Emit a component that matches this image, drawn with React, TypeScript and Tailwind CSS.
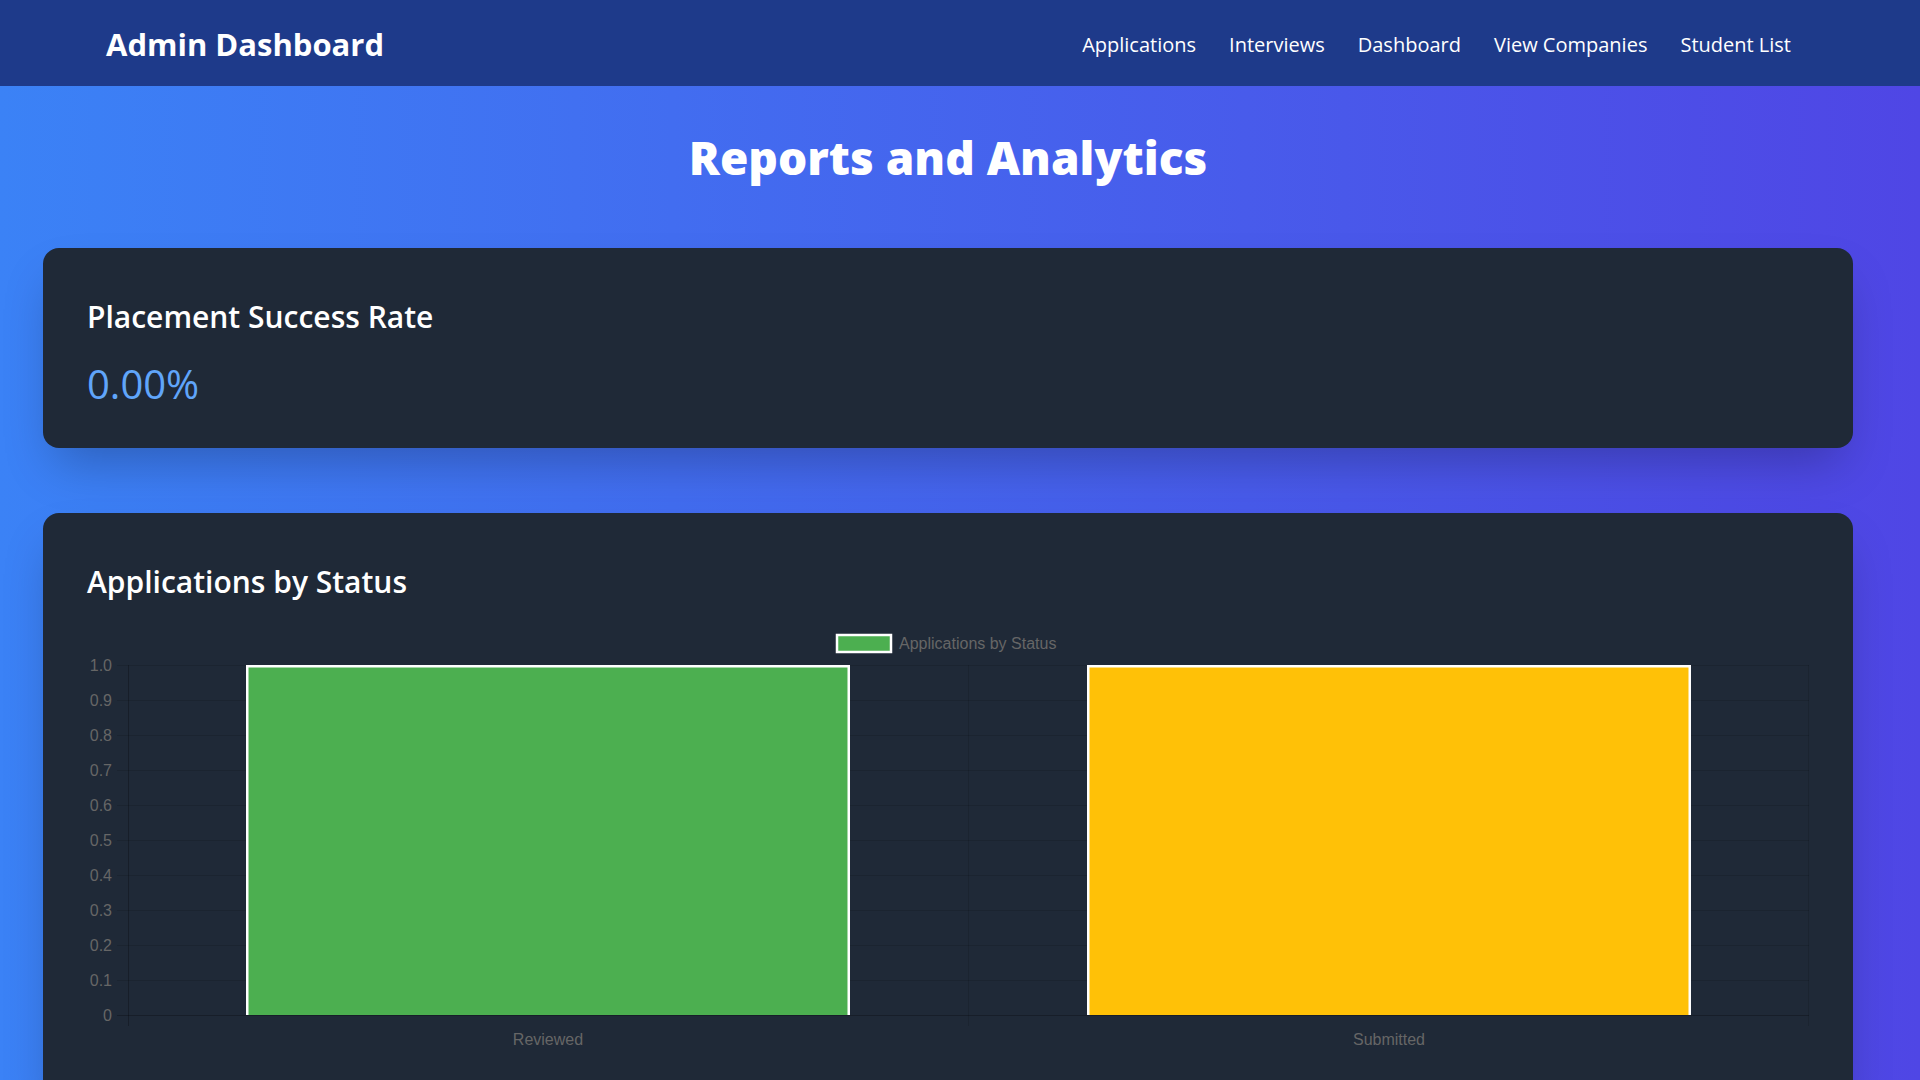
import React from "react";

const navLinks = ["Applications", "Interviews", "Dashboard", "View Companies", "Student List"];

const ticks = ["1.0", "0.9", "0.8", "0.7", "0.6", "0.5", "0.4", "0.3", "0.2", "0.1", "0"];

const bars = [
  { label: "Reviewed", color: "#4caf50", x: 159, center: 461 },
  { label: "Submitted", color: "#ffc107", x: 1000, center: 1302 },
];

// chart.js-like bar chart, drawn as svg
function StatusChart() {
  const top = 44;
  const step = 35;
  const bottom = top + step * 10;
  const barW = 604;
  const font = "'Liberation Sans', Arial, sans-serif";

  return (
    <svg width="1722" height="440" viewBox="0 0 1722 440" className="block">
      {/* legend */}
      <rect x="750" y="14" width="54" height="17" fill="#4caf50" stroke="#ffffff" strokeWidth="2.5" />
      <text x="812" y="22" fontSize="16" fill="#666666" fontFamily={font} dominantBaseline="central">
        Applications by Status
      </text>

      {/* horizontal grid */}
      {ticks.map((t, i) => (
        <g key={t}>
          <line
            x1="30"
            x2="1722"
            y1={top + step * i + 0.5}
            y2={top + step * i + 0.5}
            stroke={i === 10 ? "rgba(0,0,0,0.25)" : "rgba(0,0,0,0.12)"}
            strokeWidth="1"
          />
          <text
            x="25"
            y={top + step * i}
            fontSize="16"
            fill="#666666"
            fontFamily={font}
            textAnchor="end"
            dominantBaseline="central"
          >
            {t}
          </text>
        </g>
      ))}

      {/* vertical grid */}
      {[41, 881, 1721].map((x) => (
        <line
          key={x}
          x1={x + 0.5}
          x2={x + 0.5}
          y1={top}
          y2={bottom + 11}
          stroke={x === 41 ? "rgba(0,0,0,0.25)" : "rgba(0,0,0,0.12)"}
          strokeWidth="1"
        />
      ))}

      {/* bars */}
      {bars.map((b) => (
        <g key={b.label}>
          <rect x={b.x} y={top} width={barW} height={bottom - top} fill={b.color} />
          <path
            d={`M${b.x + 1.25} ${bottom} V${top + 1.25} H${b.x + barW - 1.25} V${bottom}`}
            fill="none"
            stroke="#ffffff"
            strokeWidth="2.5"
          />
          <text
            x={b.center}
            y={bottom + 24}
            fontSize="16"
            fill="#666666"
            fontFamily={font}
            textAnchor="middle"
            dominantBaseline="central"
          >
            {b.label}
          </text>
        </g>
      ))}
    </svg>
  );
}

export default function App() {
  return (
    <div className="min-h-[1895px] bg-[linear-gradient(to_right,#3b82f6,#4f46e5)] font-['Open_Sans',sans-serif] text-white">
      <nav className="bg-[#1e3a8a]">
        <div className="mx-[106px] flex h-[86px] max-w-[1685px] items-center justify-between pt-[3px]">
          <h1 className="text-[31px] font-bold leading-none">Admin Dashboard</h1>
          <ul className="flex items-center gap-[33px] text-[20px]">
            {navLinks.map((l) => (
              <li key={l}>
                <a href="#" className="hover:text-gray-300">
                  {l}
                </a>
              </li>
            ))}
          </ul>
        </div>
      </nav>

      <main className="px-[43px] pt-12">
        <div className="flex max-w-[1810px] flex-col gap-[65px]">
          <h1 className="mb-[3px] text-center text-[46px] font-extrabold leading-none">Reports and Analytics</h1>

          <section className="rounded-2xl bg-[#1f2937] px-[44px] pb-[40px] pt-[51px] shadow-2xl">
            <h2 className="mb-[25px] text-3xl font-semibold">Placement Success Rate</h2>
            <p className="text-[40px] leading-[48px] text-[#60a5fa]">0.00%</p>
          </section>

          <section className="rounded-2xl bg-[#1f2937] px-[44px] pb-[44px] pt-[51px] shadow-2xl">
            <h2 className="mb-[21px] text-3xl font-semibold">Applications by Status</h2>
            <StatusChart />
          </section>
        </div>
      </main>
    </div>
  );
}
